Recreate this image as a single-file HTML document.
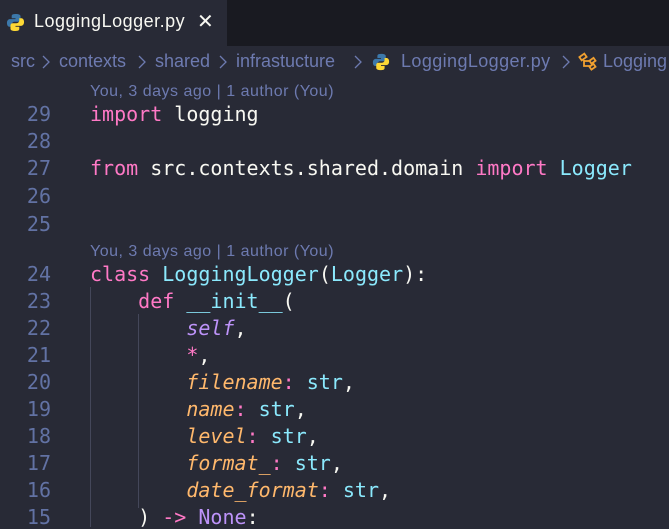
<!DOCTYPE html>
<html><head><meta charset="utf-8"><style>
*{margin:0;padding:0;box-sizing:border-box}
body{width:669px;height:527px;overflow:hidden;background:#282a36;position:relative;font-family:"Liberation Sans",sans-serif}
.tabbar{position:absolute;left:0;top:0;width:669px;height:46px;background:#191a21}
.tab{position:absolute;left:0;top:0;width:227px;height:46px;background:#282a36;color:#f8f8f2;font-size:18px;letter-spacing:.5px}
.tab span{position:absolute;left:34px;top:11px}
.tab .x{position:absolute;left:197px;top:9px;font-size:20px}
.b{position:absolute;top:51px;white-space:nowrap;color:#6d7ab0;font-size:18px;letter-spacing:0}
.sep{position:absolute;top:55px}
.lens{position:absolute;left:90px;color:#6d7ab0;font-size:16px;letter-spacing:.5px;white-space:nowrap}
.ln{position:absolute;left:0;width:51px;text-align:right;color:#6272a4;font-family:"DejaVu Sans Mono",monospace;font-size:20px}
.cd{position:absolute;left:90px;white-space:pre;color:#f8f8f2;font-family:"DejaVu Sans Mono",monospace;font-size:20px}
.k{color:#ff79c6}.c{color:#8be9fd}.p{color:#bd93f9;font-style:italic}.o{color:#ffb86c;font-style:italic}.v{color:#bd93f9}
.guide{position:absolute;width:1px;background:#44475a}
</style></head><body>
<div class="tabbar"><div class="tab">
<svg style="position:absolute;left:6px;top:13px" width="19" height="19" viewBox="0 0 20 20"><path d="M9.8 1C6 1 6 2.7 6 3.5V5.5h4v1H4.3C2.5 6.5 1 7.8 1 10.5s1.3 4 3 4H6v-2.3c0-1.6 1.3-3 3-3h4c1.3 0 2.3-1 2.3-2.3V3.5C15.3 2 14 1 9.8 1z" fill="#3c78aa"/><path d="M10.2 19c3.8 0 3.8-1.7 3.8-2.5v-2h-4v-1h5.7c1.8 0 3.3-1.3 3.3-4s-1.3-4-3-4H14v2.3c0 1.6-1.3 3-3 3H7c-1.3 0-2.3 1-2.3 2.3v3.4C4.7 18 6 19 10.2 19z" fill="#fdd835"/></svg>
<span>LoggingLogger.py</span><span class="x">✕</span></div></div>
<div class="b" style="left:11px">src</div>
<svg class="sep" style="left:42px" width="8" height="14" viewBox="0 0 8 14" fill="none" stroke="#6d7ab0" stroke-width="1.3"><path d="M1 1l6 6-6 6"/></svg>
<div class="b" style="left:59px">contexts</div>
<svg class="sep" style="left:138px" width="8" height="14" viewBox="0 0 8 14" fill="none" stroke="#6d7ab0" stroke-width="1.3"><path d="M1 1l6 6-6 6"/></svg>
<div class="b" style="left:155px">shared</div>
<svg class="sep" style="left:219px" width="8" height="14" viewBox="0 0 8 14" fill="none" stroke="#6d7ab0" stroke-width="1.3"><path d="M1 1l6 6-6 6"/></svg>
<div class="b" style="left:236px">infrastucture</div>
<svg class="sep" style="left:354px" width="8" height="14" viewBox="0 0 8 14" fill="none" stroke="#6d7ab0" stroke-width="1.3"><path d="M1 1l6 6-6 6"/></svg>
<svg style="position:absolute;left:372px;top:53px" width="18" height="18" viewBox="0 0 20 20"><path d="M9.8 1C6 1 6 2.7 6 3.5V5.5h4v1H4.3C2.5 6.5 1 7.8 1 10.5s1.3 4 3 4H6v-2.3c0-1.6 1.3-3 3-3h4c1.3 0 2.3-1 2.3-2.3V3.5C15.3 2 14 1 9.8 1z" fill="#3c78aa"/><path d="M10.2 19c3.8 0 3.8-1.7 3.8-2.5v-2h-4v-1h5.7c1.8 0 3.3-1.3 3.3-4s-1.3-4-3-4H14v2.3c0 1.6-1.3 3-3 3H7c-1.3 0-2.3 1-2.3 2.3v3.4C4.7 18 6 19 10.2 19z" fill="#fdd835"/></svg>
<div class="b" style="left:401px;letter-spacing:.4px">LoggingLogger.py</div>
<svg class="sep" style="left:562px" width="8" height="14" viewBox="0 0 8 14" fill="none" stroke="#6d7ab0" stroke-width="1.3"><path d="M1 1l6 6-6 6"/></svg>
<svg style="position:absolute;left:578px;top:52px" width="20" height="20" viewBox="0 0 20 20" fill="none" stroke="#f0a030" stroke-width="1.8"><rect x="2" y="3" width="6" height="4" transform="rotate(-35 5 5)"/><rect x="12" y="7" width="5" height="3.5" transform="rotate(-35 14.5 8.8)"/><rect x="12" y="13" width="5" height="3.5" transform="rotate(-35 14.5 14.8)"/><path d="M6 8v6h6M6 9h6"/></svg>
<div class="b" style="left:603px">Logging</div>
<div class="lens" style="top:83px">You, 3 days ago | 1 author (You)</div>
<div class="lens" style="top:243px">You, 3 days ago | 1 author (You)</div>
<div class="guide" style="left:90px;top:287px;height:240px"></div>
<div class="guide" style="left:138px;top:314px;height:194px"></div>
<div class="ln" style="top:102px">29</div><div class="cd" style="top:102px"><span class="k">import</span> logging</div>
<div class="ln" style="top:129px">28</div>
<div class="ln" style="top:156px">27</div><div class="cd" style="top:156px"><span class="k">from</span> src.contexts.shared.domain <span class="k">import</span> <span class="c">Logger</span></div>
<div class="ln" style="top:184px">26</div>
<div class="ln" style="top:212px">25</div>
<div class="ln" style="top:262px">24</div><div class="cd" style="top:262px"><span class="k">class</span> <span class="c">LoggingLogger</span>(<span class="c">Logger</span>):</div>
<div class="ln" style="top:289px">23</div><div class="cd" style="top:289px">    <span class="k">def</span> <span class="c">__init__</span>(</div>
<div class="ln" style="top:316px">22</div><div class="cd" style="top:316px">        <span class="p">self</span>,</div>
<div class="ln" style="top:343px">21</div><div class="cd" style="top:343px">        <span class="k">*</span>,</div>
<div class="ln" style="top:370px">20</div><div class="cd" style="top:370px">        <span class="o">filename</span><span class="k">:</span> <span class="c">str</span>,</div>
<div class="ln" style="top:397px">19</div><div class="cd" style="top:397px">        <span class="o">name</span><span class="k">:</span> <span class="c">str</span>,</div>
<div class="ln" style="top:424px">18</div><div class="cd" style="top:424px">        <span class="o">level</span><span class="k">:</span> <span class="c">str</span>,</div>
<div class="ln" style="top:451px">17</div><div class="cd" style="top:451px">        <span class="o">format_</span><span class="k">:</span> <span class="c">str</span>,</div>
<div class="ln" style="top:478px">16</div><div class="cd" style="top:478px">        <span class="o">date_format</span><span class="k">:</span> <span class="c">str</span>,</div>
<div class="ln" style="top:505px">15</div><div class="cd" style="top:505px">    ) <span class="k">-&gt;</span> <span class="v">None</span>:</div>
</body></html>
